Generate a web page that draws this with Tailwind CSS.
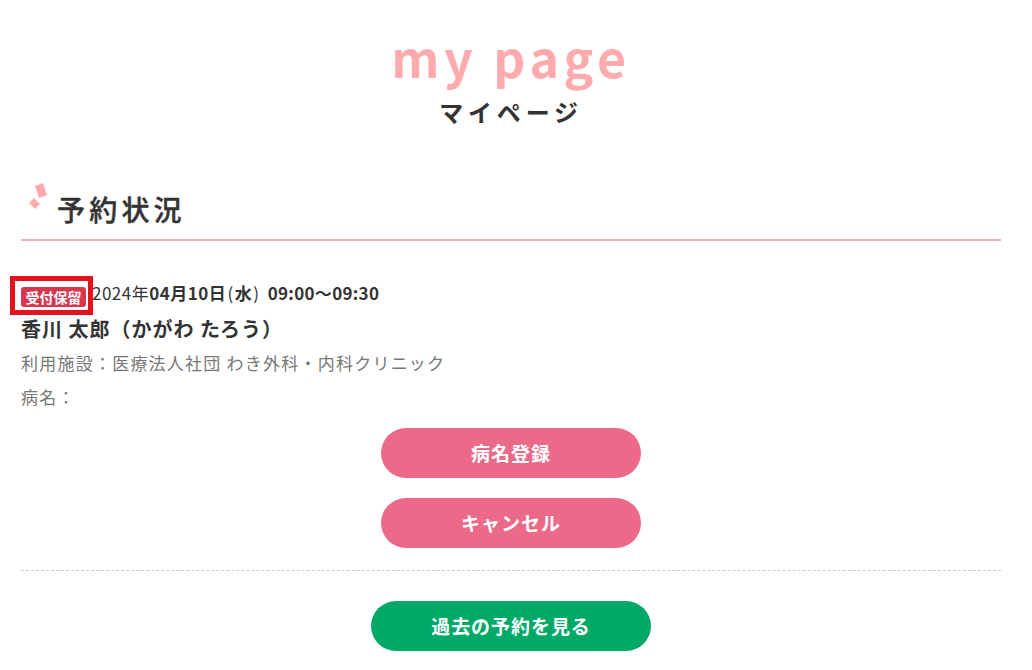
<!DOCTYPE html>
<html lang="ja">
<head>
  <meta charset="UTF-8" />
  <title>マイページ</title>
  <script src="https://cdn.jsdelivr.net/npm/@tailwindcss/browser@4"></script>
</head>
<body class="bg-white text-[#333] font-['Noto_Sans_CJK_JP','Noto_Sans',sans-serif] overflow-hidden">
  <div class="relative w-[980px] h-[670px] ml-[21px]">
    <!-- Title -->
    <div class="pt-[24px] text-center">
      <div class="text-[50px] leading-[64px] font-bold tracking-[4.6px] text-[#ffabae]">my page</div>
      <div class="mt-[6px] text-[24px] leading-[36px] font-bold tracking-[0.2em]">マイページ</div>
    </div>

    <!-- Section heading -->
    <div class="relative mt-[50px] h-[61px] border-b-2 border-[#f2b3b6] pl-[36px] pt-[8px]">
      <svg class="absolute left-[7px] top-[3px]" width="20" height="27" viewBox="0 0 20 27">
        <polygon points="7,3 15,0 19,12 11,15" fill="#ffabae" />
        <polygon points="1,20 6,15 12,21 7,26" fill="#ffabae" />
      </svg>
      <h2 class="text-[28px] leading-[42px] font-medium tracking-[0.15em] [-webkit-text-stroke:0.4px_#333]">予約状況</h2>
    </div>

    <!-- Reservation -->
    <div class="mt-[40px] flex items-start h-[26px]">
      <span class="mt-[6px] bg-[#d9364f] text-white text-[14px] leading-[20px] font-bold rounded-[3px] w-[65px] text-center">受付保留</span>
      <span class="ml-[6px] text-[17px] leading-[24px] tracking-[0.5px]">2024年<b class="font-bold">04月10日</b><span class="ml-[1px]">(<b class="font-bold px-[1px]">水</b>)</span> <b class="font-bold ml-[4px] tracking-[0.3px]">09:00～09:30</b></span>
    </div>
    <div class="mt-[7px] text-[20px] leading-[30px] font-bold tracking-[0.05em]">香川 太郎（かがわ たろう）</div>
    <p class="mt-[4px] text-[17px] leading-[30px] tracking-[1.23px] text-[#777]">利用施設：医療法人社団 わき外科・内科クリニック</p>
    <p class="mt-[4px] text-[17px] leading-[30px] tracking-[1.23px] text-[#777]">病名：</p>

    <!-- Buttons -->
    <div class="mt-[16px] flex flex-col items-center gap-[20px]">
      <a class="flex items-center justify-center w-[260px] h-[50px] rounded-full bg-[#eb6a8a] text-white text-[19px] font-bold tracking-[0.05em]">病名登録</a>
      <a class="flex items-center justify-center w-[260px] h-[50px] rounded-full bg-[#eb6a8a] text-white text-[19px] font-bold tracking-[0.05em]">キャンセル</a>
    </div>
    <div class="mt-[22px] border-t border-dashed border-[#ccc]"></div>
    <div class="mt-[30px] flex justify-center">
      <a class="flex items-center justify-center w-[280px] h-[50px] rounded-full bg-[#00a968] text-white text-[19px] font-bold tracking-[0.05em]">過去の予約を見る</a>
    </div>

    <!-- Red annotation box -->
    <div class="absolute left-[-11px] top-[276px] w-[83px] h-[39px] border-[5px] border-[#e2131f]"></div>
  </div>
</body>
</html>
